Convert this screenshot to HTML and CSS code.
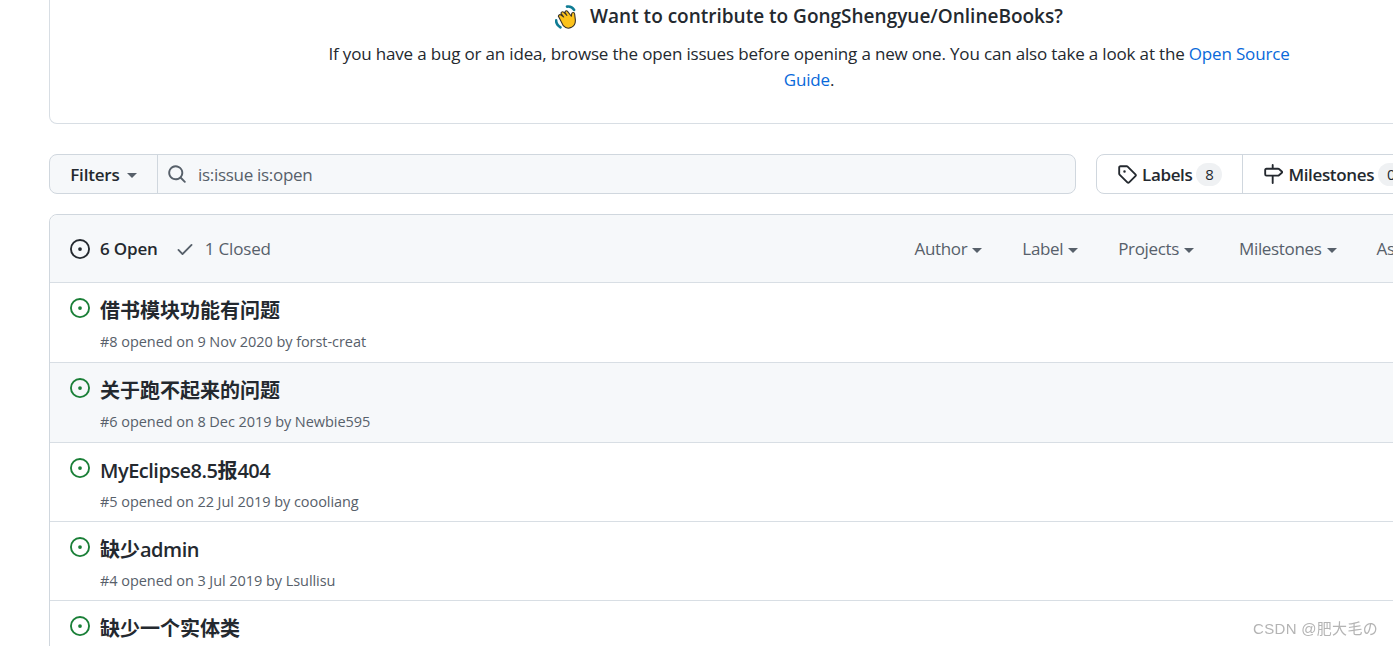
FILE: index.html
```html
<!DOCTYPE html>
<html lang="en">
<head>
  <meta charset="UTF-8">
  <meta name="viewport" content="width=device-width, initial-scale=1.0">
  <title>Issues - GongShengyue/OnlineBooks</title>
  <link rel="stylesheet" href="styles.css">
</head>
<body>
  <!-- Octicons -->
  <svg class="sprite" xmlns="http://www.w3.org/2000/svg">
    <symbol id="i-issue" viewBox="0 0 16 16"><path d="M8 9.5a1.5 1.5 0 100-3 1.5 1.5 0 000 3z"/><path fill-rule="evenodd" d="M8 0a8 8 0 100 16A8 8 0 008 0zM1.5 8a6.5 6.5 0 1113 0 6.5 6.5 0 01-13 0z"/></symbol>
    <symbol id="i-check" viewBox="0 0 16 16"><path fill-rule="evenodd" d="M13.78 4.22a.75.75 0 010 1.06l-7.25 7.25a.75.75 0 01-1.06 0L2.22 9.28a.75.75 0 011.06-1.06L6 10.94l6.72-6.72a.75.75 0 011.06 0z"/></symbol>
    <symbol id="i-search" viewBox="0 0 16 16"><path fill-rule="evenodd" d="M11.5 7a4.499 4.499 0 11-8.998 0A4.499 4.499 0 0111.5 7zm-.82 4.74a6 6 0 111.06-1.06l3.04 3.04a.75.75 0 11-1.06 1.06l-3.04-3.04z"/></symbol>
    <symbol id="i-tag" viewBox="0 0 16 16"><path fill-rule="evenodd" d="M2.5 7.775V2.75a.25.25 0 01.25-.25h5.025a.25.25 0 01.177.073l6.25 6.25a.25.25 0 010 .354l-5.025 5.025a.25.25 0 01-.354 0l-6.25-6.25a.25.25 0 01-.073-.177zm-1.5 0V2.75C1 1.784 1.784 1 2.750 1h5.025c.464 0 .91.184 1.238.513l6.25 6.25a1.75 1.75 0 010 2.474l-5.026 5.026a1.75 1.75 0 01-2.474 0l-6.25-6.25A1.75 1.75 0 011 7.775zM6 5a1 1 0 100 2 1 1 0 000-2z"/></symbol>
    <symbol id="i-milestone" viewBox="0 0 16 16"><path fill-rule="evenodd" d="M7.75 0a.75.75 0 01.75.75V3h3.634c.414 0 .814.147 1.13.414l2.07 1.75a1.75 1.75 0 010 2.672l-2.07 1.75a1.75 1.75 0 01-1.13.414H8.5v5.25a.75.75 0 11-1.5 0V10H2.75A1.75 1.75 0 011 8.25v-3.5C1 3.784 1.784 3 2.75 3H7V.75A.75.75 0 017.75 0zm0 8.5h4.384a.25.25 0 00.161-.06l2.07-1.75a.25.25 0 000-.38l-2.07-1.75a.25.25 0 00-.161-.06H2.75a.25.25 0 00-.25.25v3.5c0 .138.112.25.25.25h5z"/></symbol>
  </svg>

  <div class="page">
    <!-- Contribute box -->
    <div class="contribute">
      <h3 class="contribute-title">
        <svg class="wave" viewBox="1 1 22 22" aria-hidden="true">
          <path class="wave-mark" d="M12 2.500c3-.5 5 .5 6.500 3M2 15c0 3 1.500 5 4 6.500"/>
          <path class="wave-hand" d="M4.500 12c-1-1 .5-2.800 2-1.800l2.500 1.800-2.200-2.800c-.9-1.300.9-2.700 2.100-1.600l3 3-1.500-2.500c-.7-1.300 1.100-2.400 2.100-1.300l3.500 4.500.3-2.300c.3-1.500 2.500-1.500 2.700.2l.6 5c.4 3.500-1 6-3.500 7.300-2.700 1.300-5.700.5-7.500-1.500z"/>
        </svg>
        <span>Want to contribute to GongShengyue/OnlineBooks?</span>
      </h3>
      <p class="contribute-text">If you have a bug or an idea, browse the open issues before opening a new one. You can also take a look at the <a href="#">Open Source Guide</a>.</p>
    </div>

    <!-- Filter bar -->
    <div class="toolbar">
      <div class="search-group">
        <button class="filters-btn">Filters <span class="caret"></span></button>
        <div class="search-input">
          <svg class="icon search-icon"><use href="#i-search"/></svg>
          <span>is:issue is:open</span>
        </div>
      </div>
      <div class="nav-group">
        <a class="nav-item" href="#"><svg class="icon"><use href="#i-tag"/></svg>Labels <span class="counter">8</span></a>
        <a class="nav-item" href="#"><svg class="icon"><use href="#i-milestone"/></svg>Milestones <span class="counter">0</span></a>
      </div>
    </div>

    <!-- Issue list -->
    <div class="issues">
      <div class="issues-header">
        <div class="states">
          <a class="state active" href="#"><svg class="icon"><use href="#i-issue"/></svg>6 Open</a>
          <a class="state" href="#"><svg class="icon"><use href="#i-check"/></svg>1 Closed</a>
        </div>
        <div class="header-filters">
          <span class="header-filter">Author <span class="caret"></span></span>
          <span class="header-filter">Label <span class="caret"></span></span>
          <span class="header-filter">Projects <span class="caret"></span></span>
          <span class="header-filter milestones">Milestones <span class="caret"></span></span>
          <span class="header-filter">Assignee <span class="caret"></span></span>
          <span class="header-filter">Sort <span class="caret"></span></span>
        </div>
      </div>

      <div class="issue tall">
        <svg class="icon issue-icon"><use href="#i-issue"/></svg>
        <div>
          <a class="issue-title" href="#">借书模块功能有问题</a>
          <div class="issue-meta">#8 opened on 9 Nov 2020 by forst-creat</div>
        </div>
      </div>
      <div class="issue tall hovered">
        <svg class="icon issue-icon"><use href="#i-issue"/></svg>
        <div>
          <a class="issue-title" href="#">关于跑不起来的问题</a>
          <div class="issue-meta">#6 opened on 8 Dec 2019 by Newbie595</div>
        </div>
      </div>
      <div class="issue">
        <svg class="icon issue-icon"><use href="#i-issue"/></svg>
        <div>
          <a class="issue-title" href="#"><span class="latin">MyEclipse8.5</span>报<span class="latin">404</span></a>
          <div class="issue-meta">#5 opened on 22 Jul 2019 by coooliang</div>
        </div>
      </div>
      <div class="issue">
        <svg class="icon issue-icon"><use href="#i-issue"/></svg>
        <div>
          <a class="issue-title" href="#">缺少<span class="latin">admin</span></a>
          <div class="issue-meta">#4 opened on 3 Jul 2019 by Lsullisu</div>
        </div>
      </div>
      <div class="issue">
        <svg class="icon issue-icon"><use href="#i-issue"/></svg>
        <div>
          <a class="issue-title" href="#">缺少一个实体类</a>
          <div class="issue-meta">#3 opened on 3 Jul 2019</div>
        </div>
      </div>
    </div>
  </div>

  <div class="watermark">CSDN @肥大毛の</div>
</body>
</html>
```

FILE: styles.css
```css
/* General */
html, body {
  height: 100%;
  overflow: hidden;
}

body {
  margin: 0;
  background-color: #ffffff;
  color: #24292f;
  font-family: "Open Sans", "Noto Sans CJK SC", sans-serif;
  font-size: 17px;
  letter-spacing: -0.17px;
}

a {
  color: inherit;
  text-decoration: none;
}

.sprite {
  display: none;
}

.icon {
  width: 20px;
  height: 20px;
  fill: currentColor;
  flex: none;
}

.page {
  width: 1520px;
  margin-left: 49px;
}

.caret {
  display: inline-block;
  width: 0;
  height: 0;
  margin-left: 1px;
  vertical-align: middle;
  border-top: 5px solid #57606a;
  border-left: 5px solid transparent;
  border-right: 5px solid transparent;
}

/* Contribute box */
.contribute {
  height: 124px;
  box-sizing: border-box;
  border: 1px solid #d8dee4;
  border-top: none;
  border-radius: 0 0 8px 8px;
  text-align: center;
}

.contribute-title {
  display: flex;
  justify-content: center;
  align-items: center;
  gap: 11px;
  margin: 0;
  height: 32px;
  font-size: 19px;
  font-weight: 600;
  letter-spacing: 0;
}

.wave {
  width: 24px;
  height: 24px;
  margin-top: 1px;
}

.wave-mark {
  fill: none;
  stroke: #0f7c94;
  stroke-width: 2.4;
  stroke-linecap: round;
}

.wave-hand {
  fill: #fcc21b;
  stroke: #3a3226;
  stroke-width: 1;
  stroke-linejoin: round;
}

.contribute-text {
  width: 1000px;
  margin: 9px auto 0;
  line-height: 26px;
}

.contribute-text a {
  color: #0969da;
}

/* Filter bar */
.toolbar {
  display: flex;
  gap: 20px;
  margin-top: 30px;
  height: 40px;
}

.search-group {
  display: flex;
  flex: none;
  width: 1027px;
  border: 1px solid #d0d7de;
  border-radius: 8px;
  background-color: #f6f8fa;
  box-sizing: border-box;
}

.filters-btn {
  width: 108px;
  border: none;
  border-right: 1px solid #d0d7de;
  background: none;
  color: #24292f;
  font: inherit;
  font-weight: 600;
  letter-spacing: -0.2px;
}

.filters-btn .caret {
  margin-left: 3px;
}

.search-input {
  display: flex;
  align-items: center;
  gap: 11px;
  padding-left: 9px;
  color: #57606a;
  letter-spacing: -0.3px;
}

.search-icon {
  color: #57606a;
}

.nav-group {
  display: flex;
  border: 1px solid #d0d7de;
  border-radius: 8px;
  box-sizing: border-box;
}

.nav-item {
  display: flex;
  align-items: center;
  gap: 5px;
  padding: 0 20px;
  font-weight: 600;
  letter-spacing: -0.35px;
}

.nav-item + .nav-item {
  border-left: 1px solid #d0d7de;
}

.counter {
  min-width: 16px;
  padding: 0 5px;
  margin-left: -1px;
  border-radius: 13px;
  background-color: #eff1f3;
  font-size: 15px;
  font-weight: 500;
  line-height: 23px;
  text-align: center;
}

/* Issue list */
.issues {
  margin-top: 20px;
  border: 1px solid #d0d7de;
  border-radius: 8px 8px 0 0;
}

.issues-header {
  display: flex;
  align-items: center;
  justify-content: space-between;
  height: 67px;
  padding: 0 23px 0 20px;
  background-color: #f6f8fa;
  border-radius: 8px 8px 0 0;
}

.states {
  display: flex;
  gap: 17px;
}

.state {
  display: flex;
  align-items: center;
  gap: 10px;
  color: #57606a;
}

.state.active {
  color: #24292f;
  font-weight: 600;
}

.header-filters {
  display: flex;
  gap: 40px;
  color: #57606a;
  letter-spacing: -0.35px;
}

.header-filter.milestones {
  margin-left: 5px;
}

.issue {
  display: flex;
  gap: 10px;
  height: 79px;
  box-sizing: border-box;
  padding: 15px 20px 0;
  border-top: 1px solid #d8dee4;
}

.issue.tall {
  height: 80px;
}

.issue.hovered {
  background-color: #f6f8fa;
}

.issue-icon {
  color: #1a7f37;
}

.issue-title {
  display: block;
  font-size: 20px;
  font-weight: 700;
  line-height: 26px;
  letter-spacing: 0;
}

.issue-title .latin {
  font-weight: 600;
  letter-spacing: -0.5px;
}

.issue-meta {
  margin-top: 8px;
  color: #57606a;
  font-size: 14.5px;
  line-height: 20px;
  letter-spacing: -0.06px;
}

/* Watermark over the picture */
.watermark {
  position: fixed;
  right: 15px;
  bottom: 8px;
  color: #b4b4b4;
  font-family: "Liberation Sans", "Noto Sans CJK SC", sans-serif;
  font-size: 15px;
  letter-spacing: .3px;
}
```
